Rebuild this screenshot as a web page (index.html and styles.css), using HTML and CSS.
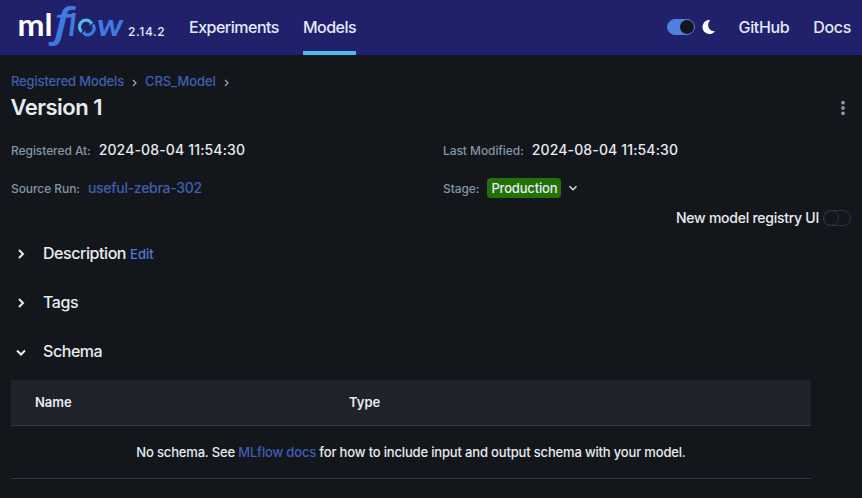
FILE: index.html
```html
<!DOCTYPE html>
<html lang="en">
<head>
<meta charset="utf-8">
<title>MLflow</title>
<link rel="stylesheet" href="styles.css">
</head>
<body>
<header class="topbar">
  <a class="logo">
    <svg width="106" height="55" viewBox="0 0 106 55">
      <text class="logo-ml" x="-1.500" y="36" textLength="35" lengthAdjust="spacingAndGlyphs">ml</text>
      <text class="logo-f" x="35" y="35.500" textLength="16.500" lengthAdjust="spacingAndGlyphs">f</text>
      <text class="logo-l" x="49.500" y="36">l</text>
      <g fill="none" stroke-width="3.200">
        <path stroke="#52b9e9" d="M62.600 31.700A6.600 6.600 0 0 1 71.500 21.900"/>
        <path stroke="#4079e0" d="M74 24.500A6.600 6.600 0 0 1 65.500 34"/>
      </g>
      <path fill="#52b9e9" d="M70.500 25.500l.5-5 3.500 2z"/>
      <path fill="#4079e0" d="M66.500 30.500l-.5 5-3.500-2z"/>
      <text class="logo-l" x="78" y="36" textLength="26" lengthAdjust="spacingAndGlyphs">w</text>
    </svg>
  </a>
  <span class="version">2.14.2</span>
  <nav class="nav">
    <a class="nav-link">Experiments</a>
    <a class="nav-link active">Models</a>
  </nav>
  <div class="tools">
    <span class="switch on"><i></i></span>
    <svg class="moon" width="14" height="16" viewBox="0 0 14 16"><path fill="#fff" d="M7.200 1A7 7 0 1 0 13 12.300C7.500 13 3.800 6.500 7.900 1.500Q8.200 1 7.200 1z"/></svg>
    <a class="tool-link github">GitHub</a>
    <a class="tool-link docs">Docs</a>
  </div>
</header>
<main>
  <div class="crumbs">
    <a class="crumb-models">Registered Models</a>
    <svg width="5" height="8" viewBox="0 0 5 8"><path d="M1 1l3 3-3 3"/></svg>
    <a class="crumb-name">CRS_Model</a>
    <svg width="5" height="8" viewBox="0 0 5 8"><path d="M1 1l3 3-3 3"/></svg>
  </div>
  <div class="title-row">
    <h1>Version 1</h1>
    <svg width="6" height="16" viewBox="0 0 6 16" fill="#8396a5"><circle cx="3" cy="2.700" r="1.900"/><circle cx="3" cy="8" r="1.900"/><circle cx="3" cy="13.300" r="1.900"/></svg>
  </div>
  <div class="meta">
    <div class="item"><span class="label">Registered At:</span><span class="value">2024-08-04 11:54:30</span></div>
    <div class="item"><span class="label">Last Modified:</span><span class="value">2024-08-04 11:54:30</span></div>
    <div class="item"><span class="label">Source Run:</span><a class="value run">useful-zebra-302</a></div>
    <div class="item"><span class="label">Stage:</span><span class="tag">Production</span><svg class="caret" width="10" height="7" viewBox="0 0 10 7"><path d="M1.500 1.200L5 4.700l3.500-3.500"/></svg></div>
  </div>
  <div class="registry"><span>New model registry UI</span><span class="switch"><i></i></span></div>
  <section class="panel"><svg width="12" height="12" viewBox="0 0 12 12"><path d="M4 2l4 4-4 4"/></svg><h2>Description</h2><a class="edit">Edit</a></section>
  <section class="panel"><svg width="12" height="12" viewBox="0 0 12 12"><path d="M4 2l4 4-4 4"/></svg><h2>Tags</h2></section>
  <section class="panel"><svg width="12" height="12" viewBox="0 0 12 12"><path d="M2 4.500l4 4 4-4"/></svg><h2>Schema</h2></section>
  <div class="table">
    <div class="thead"><span>Name</span><span>Type</span></div>
    <div class="empty"><span>No schema. See <a>MLflow docs</a> for how to include input and output schema with your model.</span></div>
  </div>
</main>
</body>
</html>
```
FILE: styles.css
```css
* { box-sizing: border-box; }
body {
  margin: 0;
  height: 498px;
  overflow: hidden;
  background: #13171b;
  color: #e8ecf0;
  font-family: Inter, "Liberation Sans", sans-serif;
  font-size: 13px;
  font-weight: 450;
}
a { color: #3f5fb5; text-decoration: none; }
svg { flex: none; }
.topbar {
  display: flex;
  height: 55px;
  padding-left: 19px;
  background: #21216b;
}
.logo { width: 106px; height: 55px; }
.logo svg { display: block; overflow: visible; }
.logo-ml { font: 700 30px Lato, sans-serif; fill: #fff; }
.logo-f { font: italic 600 40px "Open Sans", sans-serif; fill: #4079e0; }
.logo-l { font: italic 700 31px Lato, sans-serif; fill: #4079e0; }
.version {
  width: 64px;
  padding-left: 3px;
  color: #e3e9fb;
  font-size: 12px;
  line-height: 63px;
  letter-spacing: .65px;
}
.nav { display: flex; gap: 24px; }
.nav-link {
  height: 55px;
  color: #e3e9fb;
  font-size: 16px;
  line-height: 54px;
  letter-spacing: -.5px;
}
.nav-link.active { border-bottom: 4px solid #51b7e9; }
.tools {
  display: flex;
  align-items: center;
  height: 54px;
  margin-left: auto;
  padding-right: 11px;
}
.switch {
  display: flex;
  flex: none;
  width: 28px;
  height: 16px;
  border: 1px solid #2d3642;
  border-radius: 8px;
}
.switch i {
  width: 16px;
  height: 16px;
  margin: -1px;
  border: 1px solid #2d3642;
  border-radius: 50%;
}
.switch.on { justify-content: flex-end; background: #5080df; border-color: #5080df; }
.switch.on i { width: 14px; height: 14px; margin: 0; background: #13171b; border: 0; }
.moon { margin-left: 7px; }
.tool-link { color: #e3e9fb; font-size: 16px; letter-spacing: -.35px; }
.github { margin-left: 23px; }
.docs { margin-left: 24px; }
main { padding: 16px 11px 0; }
.crumbs { display: flex; align-items: center; height: 20px; letter-spacing: -.16px; }
.crumbs svg { margin: 3px 8px 0 8px; fill: none; stroke: #9aabb9; stroke-width: 1.2; }
.crumb-name { letter-spacing: -.1px; }
.title-row { display: flex; align-items: center; justify-content: space-between; height: 31px; padding-right: 5px; }
.title-row svg { margin-top: 2px; }
h1 { margin: 0 0 0 -.5px; font-size: 22px; font-weight: 600; letter-spacing: -.5px; }
.meta { display: grid; grid-template-columns: 432px 1fr; grid-template-rows: 38px 38px; margin-top: 8px; }
.item { display: flex; align-items: center; padding-top: 2px; }
.label { margin-right: 8px; color: #8295a5; font-size: 12px; letter-spacing: -.07px; }
.value { margin-top: -1px; font-size: 14px; letter-spacing: .14px; }
.run { letter-spacing: -.28px; }
.tag {
  height: 20px;
  padding: 0 4px;
  border-radius: 4px;
  background: #237004;
  font-size: 13px;
  line-height: 20px;
  letter-spacing: -.18px;
}
.caret { margin-left: 7px; fill: none; stroke: #d5dbe1; stroke-width: 1.6; }
.registry { display: flex; align-items: center; justify-content: flex-end; gap: 4px; height: 23px; font-size: 14px; letter-spacing: -.26px; }
.panel { display: flex; align-items: center; height: 49px; padding-left: 4px; }
.panel svg { margin-right: 16px; fill: none; stroke: #e8ecf0; stroke-width: 2; }
h2 { margin: 0 0 1px; font-size: 16px; font-weight: 450; letter-spacing: -.44px; }
.edit { margin: 1px 0 0 4px; color: #4c7cda; }
.table { width: 800px; margin-top: 4px; }
.thead {
  display: grid;
  grid-template-columns: 314px 1fr;
  align-items: center;
  height: 46px;
  padding: 0 0 1px 24px;
  background: #1f2229;
  border-bottom: 1px solid #343944;
  font-weight: 600;
}
.empty { display: flex; align-items: center; justify-content: center; height: 53px; border-bottom: 1px solid #343944; letter-spacing: -.17px; }
```
